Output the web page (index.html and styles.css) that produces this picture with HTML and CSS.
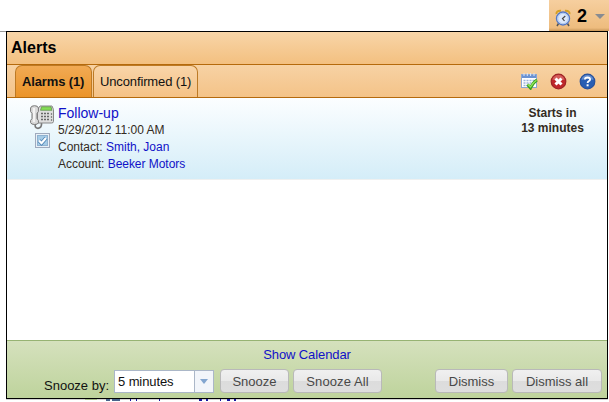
FILE: index.html
```html
<!DOCTYPE html>
<html lang="en">
<head>
<meta charset="utf-8">
<title>Alerts</title>
<link rel="stylesheet" href="styles.css">
</head>
<body>
<div class="topbar">
  <div class="alert-button">
    <svg class="clock" width="17" height="18" viewBox="0 0 17 18">
      <path d="M1.500 5Q1 1.500 6 1.800M14.500 5Q15 1.500 10 1.800" fill="none" stroke="#d6a021" stroke-width="2"/>
      <path d="M3.500 14.500L2 17M12.500 14.500L14 17" stroke="#555" stroke-width="1.500"/>
      <circle cx="8" cy="9.500" r="6.500" fill="#dce8fa" stroke="#5679c4" stroke-width="1.400"/>
      <circle cx="8" cy="9.500" r="5.200" fill="none" stroke="#afc8ee"/>
      <path d="M10.300 7L7.500 9.500L9.500 12" fill="none" stroke="#444" stroke-width="1.200"/>
    </svg>
    <span class="count">2</span>
    <span class="caret"></span>
  </div>
</div>
<div class="stage">
<span class="rule"></span>
<main class="dialog">
  <h1 class="title">Alerts</h1>
  <nav class="tabs">
    <span class="tab active">Alarms (1)</span>
    <span class="tab">Unconfirmed (1)</span>
    <div class="tools">
      <svg width="17" height="17" viewBox="0 0 17 17">
        <rect x=".5" y="1.500" width="15" height="13" fill="#fff" stroke="#8aa6d4"/>
        <path d="M1 2h14v3H1z" fill="#6b92d2"/>
        <path d="M3 0v3M6.300 0v3M9.600 0v3M13 0v3" stroke="#dce7f7"/>
        <path d="M2.500 7.500h11M2.500 10h11M2.500 12.500h8" stroke="#9cb3db" stroke-width="1.500" stroke-dasharray="2 1"/>
        <path d="M6.500 11.500l3 3.500Q12 9.500 16 7" fill="none" stroke="#39a21d" stroke-width="3"/>
        <path d="M7 11.500l2.500 2.500Q12 9.500 15.500 7.300" fill="none" stroke="#92e35b" stroke-width="1.300"/>
      </svg>
      <svg width="17" height="17" viewBox="0 0 17 17">
        <circle cx="8.500" cy="8.500" r="7.300" fill="#bf282b" stroke="#9d2426" stroke-width="1.200"/>
        <path d="M2.500 7a6 5 0 0 1 12 0Q8.500 5 2.500 7z" fill="#e07a75" opacity=".65"/>
        <path d="M5.500 5.500l6 6M11.500 5.500l-6 6" stroke="#fff" stroke-width="3"/>
      </svg>
      <svg width="17" height="17" viewBox="0 0 17 17">
        <circle cx="8.500" cy="8.500" r="7.300" fill="#285eb3" stroke="#26519c" stroke-width="1.200"/>
        <path d="M2.500 7a6 5 0 0 1 12 0Q8.500 5 2.500 7z" fill="#7fa3dc" opacity=".65"/>
        <path d="M5.900 6.600Q5.900 4.500 8.500 4.500T11.100 6.500Q11.100 7.500 9.600 8.300Q8.600 8.900 8.600 10" fill="none" stroke="#fff" stroke-width="1.800"/>
        <path d="M7.600 11.300h2v2h-2z" fill="#fff"/>
      </svg>
    </div>
  </nav>
  <section class="list">
    <article class="alarm">
      <div class="marks">
        <svg class="phone" width="25" height="25" viewBox="0 0 25 25">
          <path d="M5.500 18Q4 23 8 23.300Q12 23 11.500 18" fill="none" stroke="#777" stroke-width="1.700"/>
          <path d="M7.500 4.500L10 1h12l1.500 3.500v12q0 1.500-2 1.500h-14z" fill="#dedede" stroke="#888"/>
          <path d="M11.500 1.800h9.500l1 3.500H10.500z" fill="#84de55" stroke="#5b8d48" stroke-width=".7"/>
          <path d="M11 8.500h8M11 11.500h8M11 14.500h8" stroke="#686868" stroke-width="1.600" stroke-dasharray="2 1"/>
          <path d="M21.500 8v8" stroke="#888" stroke-width="1.200" stroke-dasharray="2 1"/>
          <path d="M.6 3Q1 .7 4.500 .7T8.400 3v3.500L7 8.500v5l1.400 2v2.300q-.4 1.700-3.900 1.700T.6 17.500v-2L2 13.500v-5L.6 6.500z" fill="#dadada" stroke="#777"/>
          <path d="M4 3v14" stroke="#f7f7f7" stroke-width="1.700"/>
        </svg>
        <svg class="check" width="15" height="15" viewBox="0 0 15 15">
          <rect x=".5" y=".5" width="14" height="14" fill="#e9f0f7" stroke="#9faabd"/>
          <rect x="2.500" y="2.500" width="10" height="10" fill="#a5cbe6" stroke="#8fb2d0"/>
          <path d="M4 7.500l2.500 2.700L11 5" fill="none" stroke="#4c83b5" stroke-width="3.800"/>
          <path d="M4 7.500l2.500 2.700L11 5" fill="none" stroke="#fff" stroke-width="2.200"/>
        </svg>
      </div>
      <div class="details">
        <div class="subject"><a>Follow-up</a></div>
        <div><span class="date">5/29/2012 11:00 AM</span></div>
        <div><span class="contact">Contact: <a>Smith, Joan</a></span></div>
        <div class="account">Account: <a>Beeker Motors</a></div>
      </div>
      <div class="due">Starts in<br>13 minutes</div>
    </article>
  </section>
  <footer class="footer">
    <div class="calendar"><a>Show Calendar</a></div>
    <div class="actions">
      <span class="label">Snooze by:</span>
      <div class="select"><span class="value">5 minutes</span><span class="arrow"></span></div>
      <button class="btn snooze">Snooze</button>
      <button class="btn snooze-all">Snooze All</button>
      <button class="btn dismiss">Dismiss</button>
      <button class="btn dismiss-all">Dismiss all</button>
    </div>
  </footer>
</main>
</div>
<svg class="underlay" width="609" height="3" viewBox="0 0 609 3">
  <path d="M6 .5h602" stroke="#d3d3d3"/>
  <path d="M85 .5h12" stroke="#a9bd8c"/>
  <path d="M106 1h4M112 1h8" stroke="#49648c" stroke-width="2"/>
  <path d="M130 1h1M136 1h1M159 1h1M199 1h3M206 1h2M220 1h1M227 1h3M234 1h2" stroke="#1818a0" stroke-width="2"/>
</svg>
</body>
</html>
```
FILE: styles.css
```css
* { box-sizing: border-box; }
body {
  margin: 0;
  height: 402px;
  overflow: hidden;
  background: #fff;
  color: #111;
  font: 13px/17px "Liberation Sans", Arial, sans-serif;
}
a { color: #1010c8; }
.topbar { height: 31px; display: flex; justify-content: flex-end; }
.alert-button {
  width: 60px;
  display: flex;
  padding-left: 6px;
  background: linear-gradient(#f6cf9f, #eebc7e 90%, #c99759);
}
.clock { margin-top: 9px; }
.count { font-size: 18px; font-weight: bold; margin: 8px 0 0 5px; width: 10px; color: #000; }
.caret {
  width: 10px;
  height: 5px;
  margin: 14px 0 0 8px;
  background: #888b91;
  clip-path: polygon(0 0, 100% 0, 50% 100%);
}
.stage { display: flex; }
.rule { width: 6px; height: 1px; background: #999; }
.dialog {
  width: 602px;
  height: 368px;
  border: 1px solid #000;
  display: flex;
  flex-direction: column;
}
.title {
  margin: 0;
  height: 33px;
  padding: 7px 4px 0;
  font-size: 16px;
  line-height: 18px;
  color: #000;
  border-bottom: 1px solid #b56a0c;
  background: linear-gradient(#f8d5a8, #f3c080);
}
.tabs {
  height: 33px;
  display: flex;
  gap: 1px;
  padding-left: 8px;
  border-bottom: 1px solid #b56a0c;
  background: linear-gradient(#f7d2a4, #f4c388);
}
.tab {
  width: 105px;
  padding: 7px 0 0 6px;
  border: 1px solid #bd7a25;
  border-bottom: 0;
  border-radius: 7px 7px 0 0;
  background: linear-gradient(#f9d5a9, #f5c286);
  white-space: nowrap;
  letter-spacing: -.13px;
}
.tab.active { width: 77px; font-weight: bold; background: linear-gradient(#f1aa54, #eb9429); }
.tools { display: flex; gap: 12px; margin: 8px 11px 0 auto; }
.list { flex: 1; }
.alarm {
  height: 82px;
  display: flex;
  padding-top: 7px;
  border-bottom: 1px solid #eef0f0;
  background: linear-gradient(#fcfeff, #d4edf8);
}
.marks { width: 51px; padding-left: 23px; }
.marks svg { display: block; }
.check { margin: 3px 0 0 5px; }
.details { width: 440px; font-size: 12px; color: #332b22; }
.subject { font-size: 14px; }
.account { letter-spacing: -.04px; }
.due { width: 109px; padding-top: 1px; text-align: center; font-size: 12px; line-height: 15px; font-weight: bold; color: #332b22; }
.footer {
  height: 58px;
  border-top: 1px solid #97b373;
  background: linear-gradient(#d5e1bd, #bed39c);
}
.calendar { height: 28px; padding-top: 5px; text-align: center; letter-spacing: -.1px; }
.actions { display: flex; padding-left: 37px; }
.label { width: 70px; padding-top: 8px; white-space: nowrap; }
.select {
  width: 100px;
  height: 23px;
  margin-top: 1px;
  display: flex;
  border: 1px solid #abb7c8;
  background: #fff;
}
.value { width: 79px; padding: 2px 0 0 3px; letter-spacing: -.1px; }
.arrow { width: 19px; border-left: 1px solid #abb7c8; background: #f2f5fa; padding: 8px 0 0 5px; }
.arrow::before {
  content: "";
  display: block;
  width: 8px;
  height: 5px;
  background: #83a6d0;
  clip-path: polygon(0 0, 100% 0, 50% 100%);
}
.btn {
  height: 24px;
  padding: 0;
  border: 1px solid #b9b9b9;
  border-radius: 4px;
  background: linear-gradient(#f0f0f0, #e9e9e9 50%, #dcdcdc 51%, #dedede);
  color: #484848;
  font: 13px "Liberation Sans", Arial, sans-serif;
}
.snooze { width: 69px; margin-left: 6px; }
.snooze-all { width: 89px; margin-left: 4px; letter-spacing: .1px; }
.dismiss { width: 73px; margin-left: auto; }
.dismiss-all { width: 90px; margin: 0 5px 0 4px; }
.underlay { display: block; }
```
